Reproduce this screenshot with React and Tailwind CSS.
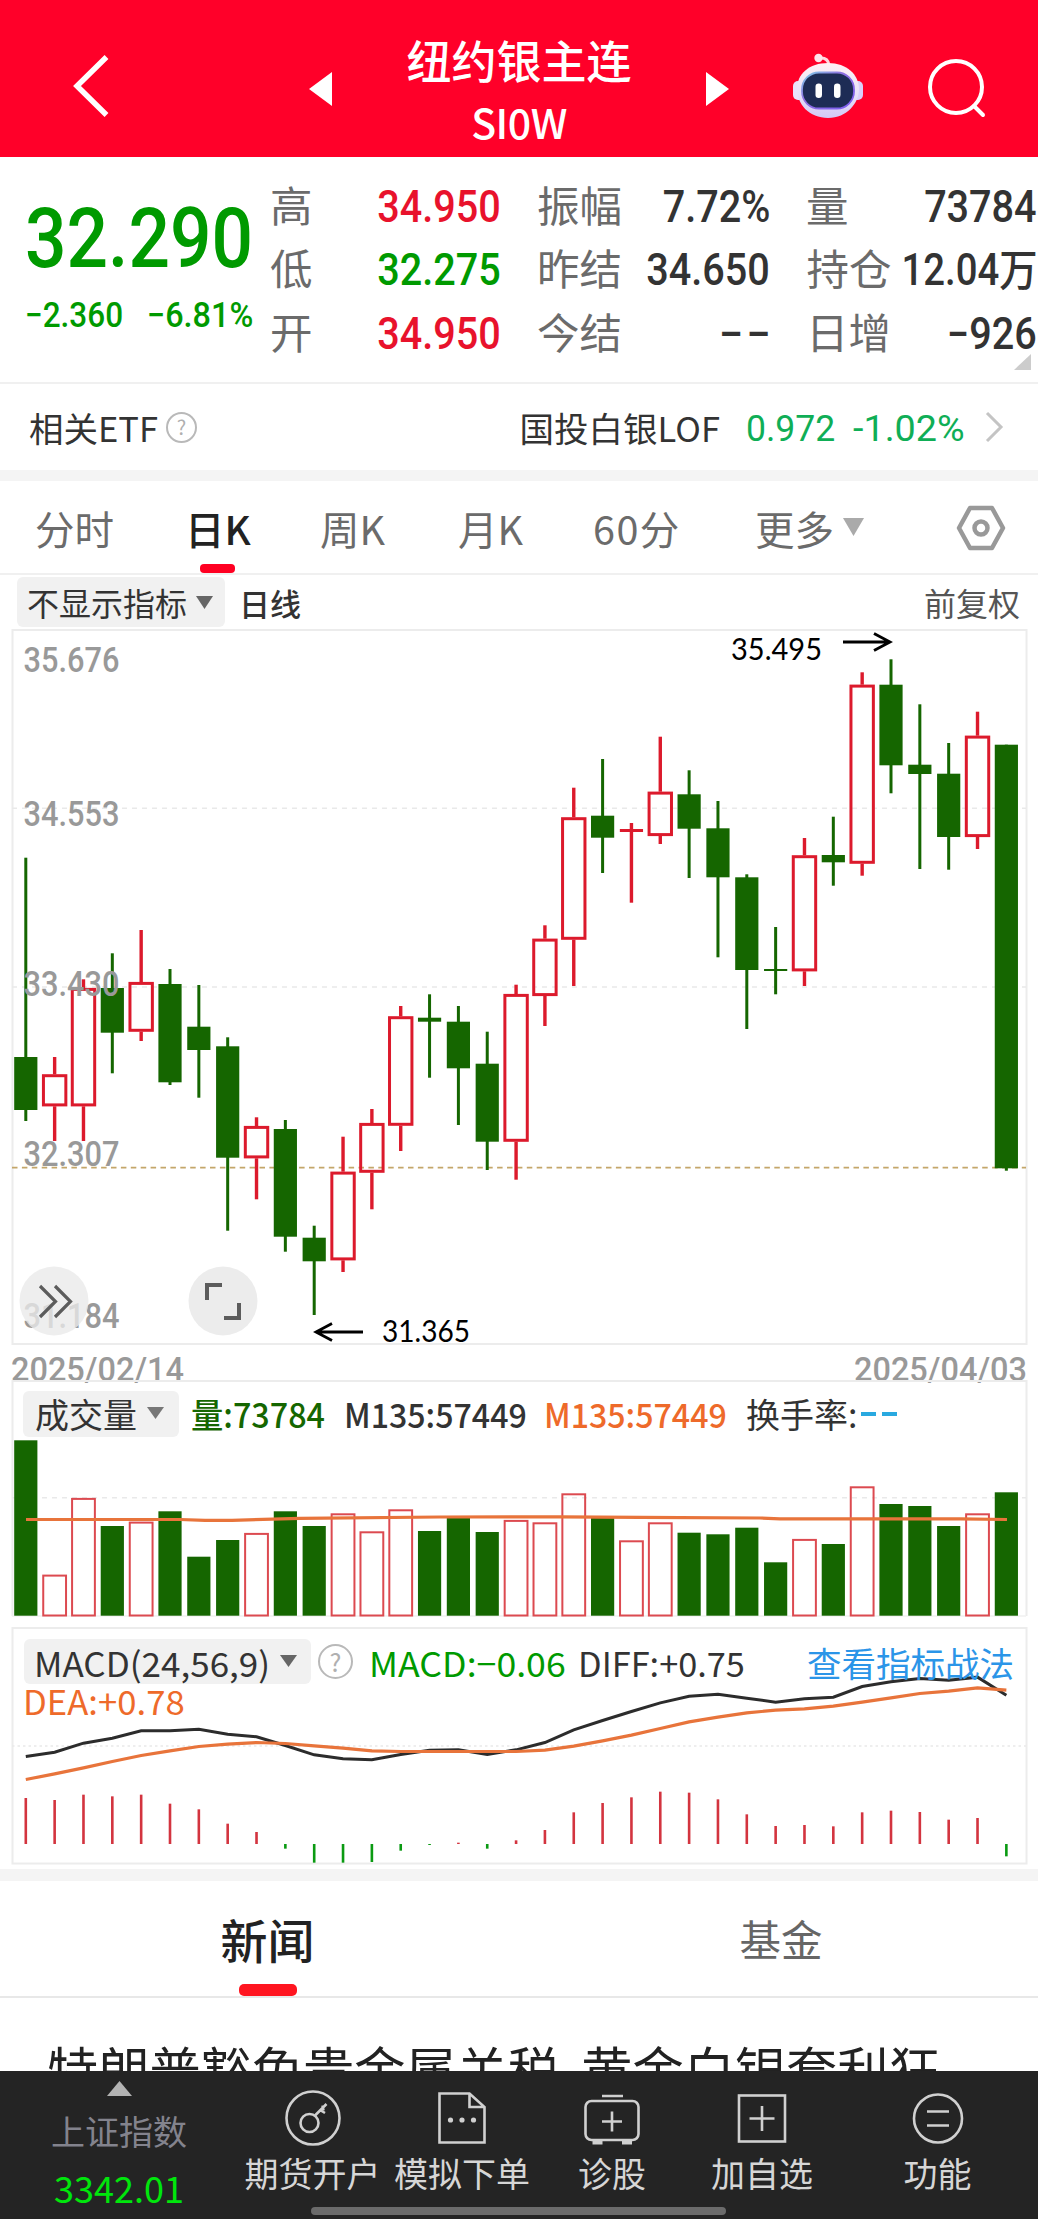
import React from 'react';

// [type, high, body top, body bottom, low]
const candles = [
  ['g', 857.7, 1057, 1110, 1121],
  ['r', 1057, 1074.3, 1106.3, 1141],
  ['r', 979.3, 988, 1106.3, 1141],
  ['g', 953.3, 988, 1032.7, 1073.3],
  ['r', 930, 982, 1031.7, 1041],
  ['g', 969, 984, 1082.3, 1085],
  ['g', 985, 1026.7, 1050, 1097.7],
  ['g', 1037.3, 1046.3, 1157.7, 1230.7],
  ['r', 1117.3, 1126, 1158.3, 1199.3],
  ['g', 1120, 1129, 1236.7, 1251.7],
  ['g', 1225.7, 1237.7, 1261.3, 1315],
  ['r', 1136.7, 1171.7, 1260.3, 1272],
  ['r', 1109, 1123, 1172.7, 1209.3],
  ['r', 1006, 1016.3, 1125.7, 1151],
  ['g', 994.3, 1017.7, 1021.7, 1077.7],
  ['g', 1006, 1021.7, 1068.3, 1125],
  ['g', 1031.7, 1063.7, 1141.7, 1170],
  ['r', 984.7, 994, 1141.7, 1179.7],
  ['r', 925.3, 938.7, 996, 1026],
  ['r', 787.7, 817.3, 939.7, 986],
  ['g', 759, 815.7, 837.7, 873],
  ['r', 823, 829, 832, 902.7],
  ['r', 736.7, 791.7, 836, 844],
  ['g', 770.3, 794.3, 828.7, 878],
  ['g', 801, 828.3, 877.3, 957.3],
  ['g', 874.3, 877.3, 970, 1029],
  ['g', 927, 969, 971, 994.3],
  ['r', 838, 855.3, 971.3, 986],
  ['g', 816.7, 855, 862.3, 885.7],
  ['r', 672.3, 684.7, 863.7, 875.7],
  ['g', 659.3, 684.7, 765.3, 793.3],
  ['g', 704.3, 764.7, 774, 869],
  ['g', 743, 773.7, 837, 869.7],
  ['r', 711.7, 735.7, 837, 849],
  ['g', 744.7, 744.7, 1168.3, 1170.7],
];

const volumeTops = [
  1440.3, 1575, 1498.3, 1526, 1522, 1511.3, 1556.7, 1540, 1533.3, 1511.3, 1526, 1513.7,
  1531.7, 1509.7, 1531, 1517.7, 1532, 1520.3, 1522.7, 1493.7, 1517.7, 1540.7, 1522.7, 1532.7,
  1534.3, 1527.7, 1562.3, 1539.3, 1544, 1486.7, 1504, 1506, 1526, 1513.7, 1492.3,
];

const diff = [
  408, 395, 368, 353, 331, 331, 326, 341, 349, 375, 403, 415, 418, 402, 389, 388, 402, 388,
  366, 328, 300, 273, 247, 227, 221, 233, 245, 235, 230, 198, 184, 174, 179, 170, 224,
];
const dea = [
  477, 460, 442, 423, 405, 391, 378, 371, 366, 369, 376, 383, 391, 393, 393, 393, 393, 393,
  389, 377, 361, 344, 324, 304, 290, 277, 269, 265, 257, 245, 232, 219, 212, 202, 209,
];
const hist = [
  534, 540, 524, 529, 524, 551, 568, 611, 636, 686, 728, 728, 726, 692, 675, 668, 686, 661,
  630, 577, 549, 532, 515, 518, 538, 583, 618, 615, 619, 577, 572, 576, 599, 594, 709,
];

const GREEN = '#156600';
const RED = '#dc1a2c';

const cx = (i) => 25.8 + i * 28.84;
const macdPoints = (list) => list.map((v, i) => `${cx(i)},${1620.5 + v / 3}`).join(' ');

function Down({ className }) {
  return (
    <svg viewBox="0 0 20 14" preserveAspectRatio="none" className={className} fill="currentColor">
      <path d="M0 0h20L10 14z" />
    </svg>
  );
}

function Help({ className }) {
  return (
    <span className={`flex items-center justify-center rounded-full border-2 border-[#b9b9b9] text-[#b0b0b0] leading-none ${className}`}>
      ?
    </span>
  );
}

function ChartText({ x, y, w, size = 35, fill = '#999', weight = 400, font = 'Roboto, sans-serif', children }) {
  return (
    <text x={x} y={y} textLength={w} lengthAdjust="spacingAndGlyphs" fontSize={size} fill={fill} fontWeight={weight} fontFamily={font}>
      {children}
    </text>
  );
}

function Header() {
  return (
    <header className="flex h-[157px] bg-[#ff0029] text-white">
      <div className="w-[309px] pl-[72px] pt-[53px]">
        <svg width="40" height="66" viewBox="0 0 40 66" fill="none" stroke="#fff" strokeWidth="5.500">
          <path d="M34.500 4 L5 33 L34.500 62" />
        </svg>
      </div>
      <svg className="mt-[72px] h-[34px] w-[23px]" viewBox="0 0 23 34" fill="#fff">
        <path d="M23 0v34L0 17z" />
      </svg>
      <div className="flex w-[374px] flex-col items-center pt-[36px]">
        <h1 className="text-[45px] leading-[48px] font-medium">纽约银主连</h1>
        <span className="mt-[13px] text-[41px] leading-[48px] tracking-[-0.5px] font-medium">SI0W</span>
      </div>
      <svg className="mt-[72px] h-[34px] w-[23px]" viewBox="0 0 23 34" fill="#fff">
        <path d="M0 0v34l23-17z" />
      </svg>
      <svg className="mt-[52px] ml-[63px] h-[67px] w-[72px]" viewBox="0 0 72 67">
        <defs>
          <linearGradient id="helmet" x1="0" y1="0" x2="0" y2="1">
            <stop offset="0" stopColor="#fff0f4" />
            <stop offset="0.600" stopColor="#e6e0f8" />
            <stop offset="1" stopColor="#d3c9f5" />
          </linearGradient>
          <linearGradient id="rim" x1="0" y1="0" x2="1" y2="1">
            <stop offset="0" stopColor="#7fd0e8" />
            <stop offset="0.400" stopColor="#8f6fe0" />
            <stop offset="1" stopColor="#7a5cf0" />
          </linearGradient>
        </defs>
        <path d="M27 6q9-1 10 7" fill="none" stroke="#ffd5df" strokeWidth="3" />
        <circle cx="26.500" cy="6" r="4.200" fill="#ffe3ea" />
        <rect x="1" y="29" width="12" height="19" rx="5" fill="#e9e2fb" />
        <rect x="59" y="29" width="12" height="19" rx="5" fill="#d9cffa" />
        <path d="M36 11c19 0 31 12 31 26S55 66 36 66 5 52 5 37s12-26 31-26z" fill="url(#helmet)" />
        <rect x="10" y="20.500" width="52" height="36" rx="17" fill="#1d2c55" stroke="url(#rim)" strokeWidth="1.800" />
        <rect x="23.500" y="31.500" width="6.500" height="14.500" rx="3.200" fill="#fff" />
        <rect x="42" y="31.500" width="6.500" height="14.500" rx="3.200" fill="#fff" />
      </svg>
      <svg className="mt-[57px] ml-[62px] h-[62px] w-[62px]" viewBox="0 0 62 62" fill="none" stroke="#fff" strokeWidth="4" strokeLinecap="round">
        <circle cx="30" cy="30" r="26" />
        <path d="M48 49l9 9" />
      </svg>
    </header>
  );
}

function Stat({ label, value, color = 'text-[#333]' }) {
  return (
    <div className="flex h-[63.5px] items-center justify-between">
      <span className="pb-[4px] text-[42.500px] leading-none text-[#6b6b6b]">{label}</span>
      <span className={`origin-right scale-x-[0.91] pt-[3px] font-[Roboto,'Noto_Sans_CJK_SC',sans-serif] text-[43.5px] leading-none font-medium whitespace-nowrap ${color}`}>
        {value}
      </span>
    </div>
  );
}

function Quote() {
  return (
    <section className="relative flex h-[227px] border-b-2 border-[#f0f0f0] pt-[17px]">
      <div className="w-[270px] pl-[25px] font-[Roboto,sans-serif] text-[#009a00]">
        <div className="mt-[23px] w-max origin-left scale-x-[0.87] text-[84px] leading-[84px] font-medium">32.290</div>
        <div className="mt-[13px] flex text-[35px] leading-[44px] font-medium">
          <span className="w-[122px]">
            <span className="inline-block origin-left scale-x-[0.9]">−2.360</span>
          </span>
          <span className="inline-block origin-left scale-x-[0.925]">−6.81%</span>
        </div>
      </div>
      <div className="w-[231px]">
        <Stat label="高" value="34.950" color="text-[#e8122c]" />
        <Stat label="低" value="32.275" color="text-[#009a00]" />
        <Stat label="开" value="34.950" color="text-[#e8122c]" />
      </div>
      <div className="ml-[36px] w-[233px]">
        <Stat label="振幅" value="7.72%" />
        <Stat label="昨结" value="34.650" />
        <div className="flex h-[63.5px] items-center justify-between">
          <span className="pb-[4px] text-[42.500px] leading-none text-[#6b6b6b]">今结</span>
          <span className="mr-[-4px] pt-[3px] font-[Roboto,sans-serif] text-[43.5px] leading-none font-medium tracking-[3px] text-[#333]">−−</span>
        </div>
      </div>
      <div className="ml-[36px] w-[231px]">
        <Stat label="量" value="73784" />
        <div className="flex h-[63.5px] items-center justify-end">
          <span className="w-[90px] shrink-0 pb-[4px] text-[42.500px] leading-none text-[#6b6b6b]">持仓</span>
          <span className="-ml-[14px] flex shrink-0 origin-right scale-x-[0.88] items-center pt-[3px] font-[Roboto,sans-serif] text-[43.5px] leading-none font-medium whitespace-nowrap text-[#333]">
            12.04<span className="pb-[6px] font-['Noto_Sans_CJK_SC',sans-serif]">万</span>
          </span>
        </div>
        <Stat label="日增" value="−926" />
      </div>
      <svg className="absolute right-[7px] bottom-[12px] h-[16px] w-[17px]" viewBox="0 0 17 16" fill="#ccc">
        <path d="M17 0v16H0z" />
      </svg>
    </section>
  );
}

function EtfRow() {
  return (
    <section className="flex h-[97px] items-center border-b-[11px] border-[#f4f4f4] pr-[34px] pl-[29px] text-[34.5px] leading-none text-[#333]">
      <span>相关ETF</span>
      <Help className="ml-[8px] h-[31px] w-[31px] text-[20px]" />
      <span className="ml-auto">国投白银LOF</span>
      <span className="ml-[26px] w-[88px] pt-[2px] font-[Roboto,sans-serif] text-[37px] text-[#0fae56]">
        <span className="inline-block origin-left scale-x-[0.96]">0.972</span>
      </span>
      <span className="ml-[19px] w-[113px] pt-[2px] font-[Roboto,sans-serif] text-[37px] text-[#0fae56]">
        <span className="inline-block origin-left scale-x-[1.02]">-1.02%</span>
      </span>
      <svg className="ml-[19px] h-[32px] w-[19px]" viewBox="0 0 19 32" fill="none" stroke="#c4c4c4" strokeWidth="3">
        <path d="M2 2l14 14L2 30" />
      </svg>
    </section>
  );
}

function Periods() {
  return (
    <nav className="flex h-[94px] items-center border-b-2 border-[#f0f0f0] pt-[2px] pl-[35px] text-[39.5px] leading-none text-[#6b6b6b]">
      <span className="w-[150px]">分时</span>
      <span className="relative w-[135px] font-medium text-[#222]">
        日K
        <i className="absolute top-[56px] left-[15px] h-[9px] w-[35px] rounded-[4px] bg-[#ff0022]" />
      </span>
      <span className="w-[138px]">周K</span>
      <span className="w-[135px]">月K</span>
      <span className="w-[162px] tracking-[1.5px]">60分</span>
      <span className="w-[88px]">更多</span>
      <Down className="mb-[3px] h-[18px] w-[21px] text-[#aaa]" />
      <svg className="ml-[92px] h-[46px] w-[50px]" viewBox="0 0 50 46" fill="none" stroke="#999" strokeWidth="4.500" strokeLinejoin="round">
        <path d="M14 3h22l11 20-11 20H14L3 23z" />
        <circle cx="25" cy="23" r="6.500" />
      </svg>
    </nav>
  );
}

function IndicatorBar() {
  return (
    <div className="flex h-[54px] items-center pr-[18px] pl-[17px] text-[32px] leading-none text-[#333]">
      <span className="flex h-[50px] w-[208px] items-center gap-[9px] rounded-[6px] bg-[#f1f1f1] pl-[10px]">
        不显示指标
        <Down className="h-[13px] w-[17px] text-[#666]" />
      </span>
      <span className="ml-[14px] text-[31px] font-medium">日线</span>
      <span className="ml-auto text-[#555]">前复权</span>
    </div>
  );
}

function KLine() {
  return (
    <div className="h-[716px]">
      <svg className="block" width="1038" height="716" viewBox="0 629 1038 716">
        <rect x="12.500" y="630" width="1014" height="714" fill="none" stroke="#ececec" strokeWidth="2" />
        <path d="M12 808.300H1026M12 987H1026" stroke="#e9e9e9" strokeWidth="1.500" strokeDasharray="5 5" />
        <path d="M12 1167.700H1026" stroke="#c4a66a" strokeWidth="1.700" strokeDasharray="5.500 4.400" />
        {candles.map(([type, high, top, bottom, low], i) =>
          type === 'g' ? (
            <g key={i} fill={GREEN}>
              <rect x={cx(i) - 1.5} y={high} width="3" height={low - high} />
              <rect x={cx(i) - 11.6} y={top} width="23.200" height={bottom - top} />
            </g>
          ) : (
            <g key={i} fill={RED}>
              <rect x={cx(i) - 1.7} y={high} width="3.400" height={top - high} />
              <rect x={cx(i) - 1.7} y={bottom} width="3.400" height={low - bottom} />
              {bottom - top < 5 ? (
                <rect x={cx(i) - 11.6} y={top} width="23.200" height="3" />
              ) : (
                <rect x={cx(i) - 11.2} y={top + 1.4} width="22.400" height={bottom - top - 2.8} fill="none" stroke={RED} strokeWidth="3" />
              )}
            </g>
          )
        )}
        <ChartText x={23.500} y={671.5} w={96} weight={500}>35.676</ChartText>
        <ChartText x={23.500} y={826} w={96} weight={500}>34.553</ChartText>
        <ChartText x={23.500} y={996} w={96} weight={500}>33.430</ChartText>
        <ChartText x={23.500} y={1166} w={96} weight={500}>32.307</ChartText>
        <ChartText x={23.500} y={1328} w={96} weight={500}>31.184</ChartText>
        <ChartText x={731} y={660} w={91} size={31} fill="#000" font="Lato, sans-serif">35.495</ChartText>
        <ChartText x={382} y={1342} w={88} size={31} fill="#000" font="Lato, sans-serif">31.365</ChartText>
        <path d="M843 642H889M874 633.500L890 642L874 650.500" fill="none" stroke="#000" strokeWidth="2.800" />
        <path d="M363 1332H317M332 1323.500L316 1332L332 1340.500" fill="none" stroke="#000" strokeWidth="2.800" />
        <circle cx="54" cy="1301" r="34.500" fill="#e9e9e9" fillOpacity="0.780" />
        <circle cx="223" cy="1301" r="34.500" fill="#ececec" />
        <g fill="none" stroke="#5c5c5c" strokeWidth="3.200">
          <path d="M40 1286l15.500 15.500L40 1317M55 1286l15.500 15.500L55 1317" />
          <path d="M207 1300v-15h15M239 1303v15h-15" strokeWidth="4" />
        </g>
      </svg>
    </div>
  );
}

function Dates() {
  return (
    <svg className="relative block overflow-visible" width="1038" height="35" viewBox="0 1345 1038 35">
      <ChartText x={11} y={1381} w={173} size={34} weight={500}>2025/02/14</ChartText>
      <ChartText x={854} y={1381} w={173} size={34} weight={500}>2025/04/03</ChartText>
    </svg>
  );
}

function Volume() {
  return (
    <div className="relative h-[247px] pt-[11px]">
      <svg className="absolute inset-0" width="1038" height="247" viewBox="0 1380 1038 247">
        <path d="M12.500 1616V1381H1026.500V1616" fill="none" stroke="#ececec" strokeWidth="2" />
        <path d="M12 1616H1026" stroke="#f1f1f1" strokeWidth="1.500" />
        <path d="M12 1497.700H1026" stroke="#e9e9e9" strokeWidth="1.500" strokeDasharray="5 5" />
        {volumeTops.map((top, i) =>
          candles[i][0] === 'g' ? (
            <rect key={i} x={cx(i) - 11.6} y={top} width="23.200" height={1615.7 - top} fill={GREEN} />
          ) : (
            <rect key={i} x={cx(i) - 11.4} y={top + 0.6} width="22.800" height={1614.9 - top} fill="none" stroke="#dc4a50" strokeWidth="2" />
          )
        )}
        <path d="M26 1519.500H180L205 1520.300H232L300 1518.300L440 1517L560 1516.800L640 1517.300L760 1518L780 1518.800H960L1007 1519.500" fill="none" stroke="#e8743b" strokeWidth="3.200" />
      </svg>
      <div className="relative ml-[23px] flex h-[46px] items-center text-[34px] leading-none whitespace-nowrap">
        <span className="flex h-[46px] w-[156px] items-center gap-[10px] rounded-[6px] bg-[#f1f1f1] pl-[12px] text-[#333]">
          成交量
          <Down className="mb-[2px] h-[12px] w-[17px] text-[#777]" />
        </span>
        <span className="ml-[12px] w-[153px] text-[#156600]">
          <span className="inline-block origin-left scale-x-[0.95] font-medium">量:73784</span>
        </span>
        <span className="w-[200px] text-[#333]">
          <span className="inline-block origin-left scale-x-[0.945] font-medium">M135:57449</span>
        </span>
        <span className="w-[202px] text-[#ee6a2a]">
          <span className="inline-block origin-left scale-x-[0.945] font-medium">M135:57449</span>
        </span>
        <span className="text-[#333]">换手率:</span>
        <span className="flex gap-[6px] pl-[4px]">
          <i className="h-[3.500px] w-[15px] bg-[#29a9e0]" />
          <i className="h-[3.500px] w-[15px] bg-[#29a9e0]" />
        </span>
      </div>
    </div>
  );
}

function Macd() {
  return (
    <div className="relative h-[242px] pt-[12px]">
      <svg className="absolute inset-0" width="1038" height="242" viewBox="0 1627 1038 242">
        <rect x="12.500" y="1628" width="1014" height="235.500" fill="none" stroke="#ececec" strokeWidth="2" />
        <path d="M12 1746H1026" stroke="#e9e9e9" strokeWidth="1.500" strokeDasharray="2.500 3" />
        {hist.map((v, i) => (
          <rect
            key={i}
            x={cx(i) - 1.3}
            y={v < 672 ? 1620 + v / 3 : 1844}
            width="2.600"
            height={Math.abs(672 - v) / 3}
            fill={v < 672 ? '#d3343f' : '#0a9a12'}
          />
        ))}
        <polyline points={macdPoints(diff)} fill="none" stroke="#2c2c2c" strokeWidth="3" />
        <polyline points={macdPoints(dea)} fill="none" stroke="#e8743b" strokeWidth="3.200" />
      </svg>
      <div className="relative mx-[24px] flex h-[45px] items-center text-[34px] leading-none whitespace-nowrap">
        <span className="flex h-[45px] w-[287px] items-center rounded-[6px] bg-[#f1f1f1] pt-[2px] pl-[10px] text-[#333]">
          <span className="w-[246px]">
            <span className="inline-block origin-left scale-x-[1.03]">MACD(24,56,9)</span>
          </span>
          <Down className="mb-[3px] h-[12px] w-[17px] text-[#666]" />
        </span>
        <Help className="ml-[7px] h-[35px] w-[35px] text-[25px]" />
        <span className="ml-[16px] w-[209px] pt-[2px] text-[#009a00]">
          <span className="inline-block origin-left scale-x-[1.05]">MACD:−0.06</span>
        </span>
        <span className="pt-[2px] text-[#333]">
          <span className="inline-block origin-left scale-x-[1.01]">DIFF:+0.75</span>
        </span>
        <span className="absolute right-0 pt-[2px] text-[34.500px] text-[#2b95e8]">查看指标战法</span>
      </div>
      <div className="relative -mt-px ml-[23px] text-[34px] leading-[36px] text-[#ee6a2a]">
        <span className="inline-block origin-left scale-x-[1.02]">DEA:+0.78</span>
      </div>
    </div>
  );
}

function News() {
  return (
    <section className="h-[202px] overflow-hidden border-t-[12px] border-[#f4f4f4]">
      <div className="flex h-[117px] border-b-2 border-[#e8e8e8] leading-none">
        <div className="flex w-[535px] flex-col items-center pt-[34px] text-[47px] font-medium text-[#222]">
          新闻
          <i className="mt-[22px] h-[12px] w-[58px] rounded-[5px] bg-[#ff1520]" />
        </div>
        <div className="w-[492px] pt-[37px] text-center text-[41.500px] text-[#666]">基金</div>
      </div>
      <p className="mt-[40px] ml-[47px] text-[51.200px] leading-[60px] whitespace-nowrap text-[#222] [word-spacing:11px]">
        特朗普豁免贵金属关税 黄金白银套利狂
      </p>
    </section>
  );
}

function Action({ label, className, children }) {
  return (
    <div className={`flex flex-col items-center ${className}`}>
      <svg className="mt-[18px] h-[60px] w-[60px]" viewBox="0 0 60 60" fill="none" stroke="#d0d0d0" strokeWidth="2.600">
        {children}
      </svg>
      <span className="mt-[6px] text-[34px] leading-[36px] whitespace-nowrap text-[#d6d6d6]">{label}</span>
    </div>
  );
}

function BottomBar() {
  return (
    <footer className="relative flex h-[148px] bg-[#242424]">
      <div className="flex w-[238px] flex-col items-center">
        <svg className="mt-[10px] h-[15px] w-[25px]" viewBox="0 0 25 15" fill="#b3b3b3">
          <path d="M12.500 0L25 15H0z" />
        </svg>
        <span className="mt-[17px] text-[34px] leading-[36px] text-[#83838d]">上证指数</span>
        <span className="mt-[18px] text-[36px] leading-[40px] text-[#00e60c]">3342.01</span>
      </div>
      <Action label="期货开户" className="w-[149px]">
        <circle cx="30" cy="29" r="26.500" />
        <circle cx="26.500" cy="34" r="9" />
        <path d="M32 26.500L43.500 15M37 21l5 3M39.500 16.500l1 5" />
      </Action>
      <Action label="模拟下单" className="w-[150px]">
        <path d="M7.500 4.500H37.500L52.500 18V53.500H7.500zM37.500 4.500V18H52.500" />
        <g fill="#d0d0d0" stroke="none">
          <circle cx="18.500" cy="31" r="2.600" />
          <circle cx="30" cy="31" r="2.600" />
          <circle cx="41.500" cy="31" r="2.600" />
        </g>
      </Action>
      <Action label="诊股" className="w-[150px]">
        <rect x="3.500" y="12" width="53" height="39" rx="6" />
        <path d="M20 7h21M30 22.500v20M20 32.500h20" />
        <path d="M10.500 53.500h10M40 53.500h10" strokeWidth="4" />
      </Action>
      <Action label="加自选" className="w-[150px]">
        <rect x="7" y="6.500" width="46" height="46" />
        <path d="M30 17v25M17.500 29.500h25" />
      </Action>
      <Action label="功能" className="w-[201px]">
        <circle cx="30" cy="29.500" r="24" />
        <path d="M19 22.500h22M19 36.500h22" />
      </Action>
      <i className="absolute bottom-[4px] left-[311px] h-[8px] w-[415px] rounded-full bg-[#6b6b6b]" />
    </footer>
  );
}

export default function App() {
  return (
    <main className="h-[2219px] w-[1038px] overflow-hidden bg-white font-['Noto_Sans_CJK_SC',sans-serif]">
      <Header />
      <Quote />
      <EtfRow />
      <Periods />
      <IndicatorBar />
      <KLine />
      <Dates />
      <Volume />
      <Macd />
      <News />
      <BottomBar />
    </main>
  );
}
